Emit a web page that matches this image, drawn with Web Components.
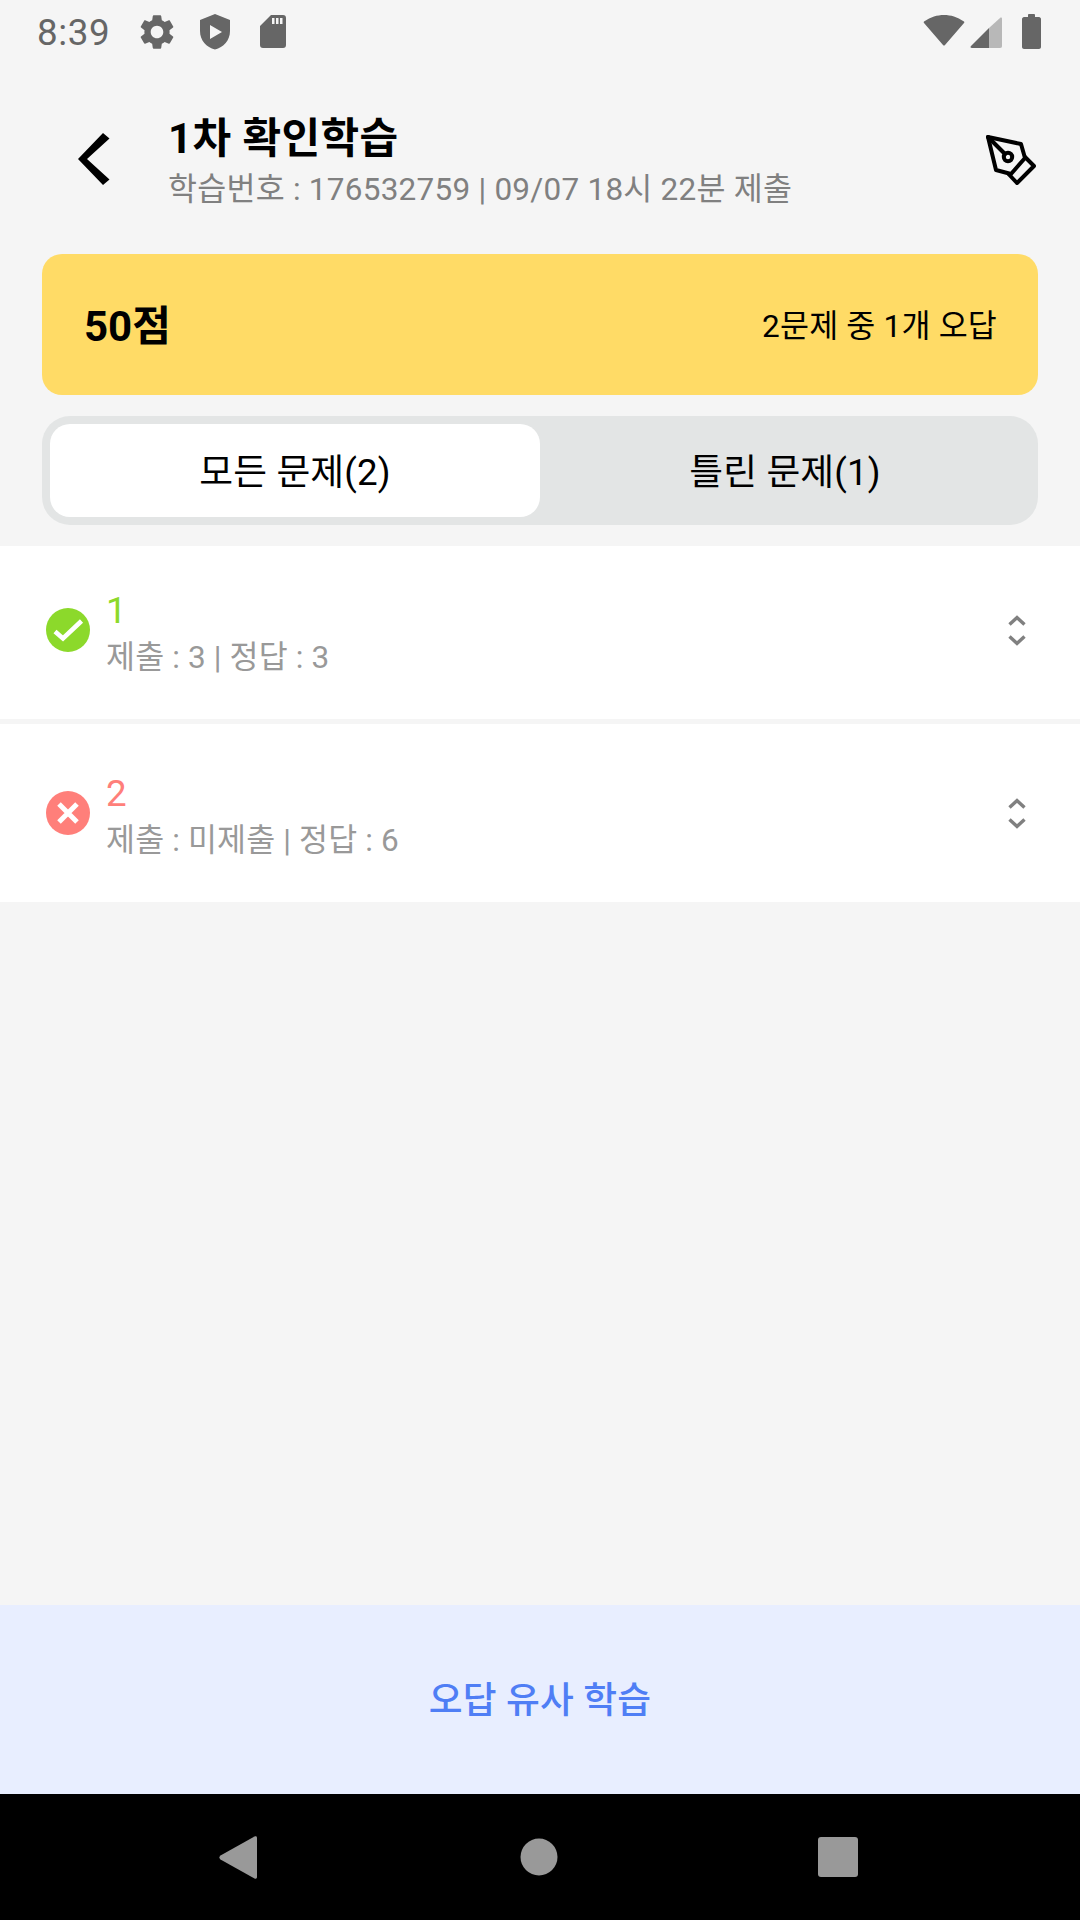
<!DOCTYPE html>
<html lang="ko">
<head>
<meta charset="utf-8">
<title>1차 확인학습</title>
<style>
html, body
{
    margin: 0;
    padding: 0;
    background: #f5f5f5;
    font-family: Roboto, "Noto Sans CJK KR", sans-serif;
}
</style>
</head>
<body>

<review-screen>
    <status-bar slot="top" time="8:39"></status-bar>
    <app-header slot="top">
        <span slot="title">1차 확인학습</span>
        <span slot="sub">학습번호 : 176532759 | 09/07 18시 22분 제출</span>
    </app-header>
    <score-card slot="top">
        <span slot="score">50점</span>
        <span slot="summary">2문제 중 1개 오답</span>
    </score-card>
    <segment-tabs slot="top">
        <span slot="first">모든 문제(2)</span>
        <span slot="second">틀린 문제(1)</span>
    </segment-tabs>
    <question-item status="right" number="1" detail="제출 : 3 | 정답 : 3"></question-item>
    <question-item status="wrong" number="2" detail="제출 : 미제출 | 정답 : 6"></question-item>
    <action-button slot="bottom">오답 유사 학습</action-button>
    <nav-bar slot="bottom"></nav-bar>
</review-screen>

<script>
const screenTemplate = document.createElement('template')

screenTemplate.innerHTML =
`
<style>
:host
{
    display: flex;
    flex-direction: column;
    width: 1080px;
    height: 1920px;
    overflow: hidden;
    background-color: #f5f5f5;
}

/* the list is scrolled a little, so the first row starts under its top edge */

#list
{
    display: flex;
    flex-direction: column;
    gap: 5px;
    flex: 1;
    min-height: 0;
    margin-top: 21px;
    overflow: hidden;
}
slot:not([name])::slotted(question-item:first-of-type)
{
    margin-top: -5px;
}
</style>
<slot name="top"></slot>
<div id="list"><slot></slot></div>
<slot name="bottom"></slot>
`

class ReviewScreen extends HTMLElement
{
    constructor()
    {
        super()

        this.attachShadow({mode: "open"})

        this.shadowRoot.appendChild(screenTemplate.content.cloneNode(true))
    }
}

const statusTemplate = document.createElement('template')

statusTemplate.innerHTML =
`
<style>
:host
{
    display: flex;
    align-items: center;
    height: 63px;
    padding: 0 39px 0 37px;
    color: #666666;
    font-size: 36.75px;
}

svg
{
    display: block;
    fill: #666666;
}

/* LEFT */

#time
{
    width: 71px;
    padding-top: 2px;
    line-height: 61px;
    letter-spacing: 0.6px;
}
#gear
{
    margin-left: 28px;
}
#shield
{
    margin-left: 16px;
}
#card
{
    margin-left: 22px;
}

/* RIGHT */

#right
{
    display: flex;
    align-items: center;
    margin-left: auto;
}
#wifi
{
    margin-bottom: 3px;
}
#signal
{
    margin-left: 5px;
}
#battery
{
    margin-left: 20px;
}
</style>
<span id="time"></span>
<svg id="gear" width="42" height="42" viewBox="0 0 24 24"><path d="M19.14 12.94c.04-.3.06-.61.06-.94 0-.32-.02-.64-.07-.94l2.03-1.58c.18-.14.23-.41.12-.61l-1.92-3.32c-.12-.22-.37-.29-.59-.22l-2.39.96c-.5-.38-1.03-.7-1.62-.94l-.36-2.54c-.04-.24-.24-.41-.48-.41h-3.84c-.24 0-.43.17-.47.41l-.36 2.54c-.59.24-1.13.57-1.62.94l-2.39-.96c-.22-.08-.47 0-.59.22L2.74 8.87c-.12.21-.08.47.12.61l2.03 1.58c-.05.3-.09.63-.09.94s.02.64.07.94l-2.03 1.58c-.18.14-.23.41-.12.61l1.92 3.32c.12.22.37.29.59.22l2.39-.96c.5.38 1.03.7 1.62.94l.36 2.54c.05.24.24.41.48.41h3.84c.24 0 .44-.17.47-.41l.36-2.54c.59-.24 1.13-.56 1.62-.94l2.39.96c.22.08.47 0 .59-.22l1.92-3.32c.12-.22.07-.47-.12-.61l-2.01-1.58zM12 15.6c-1.98 0-3.6-1.62-3.6-3.6s1.62-3.6 3.6-3.6 3.6 1.62 3.6 3.6-1.62 3.6-3.6 3.6z"/></svg>
<svg id="shield" width="42" height="42" viewBox="0 0 42 42"><path fill-rule="evenodd" d="M21 3 L36 9 V20 C36 29.500 29.500 36.500 21 38.500 C12.500 36.500 6 29.500 6 20 V9 Z M16 14 V28 L28 21 Z"/></svg>
<svg id="card" width="30" height="42" viewBox="0 0 30 42"><path fill-rule="evenodd" d="M13 4 H25 C27 4 28 5 28 7 V34 C28 36 27 37 25 37 H5 C3 37 2 36 2 34 V15 Z M14 7 V13 H16.500 V7 Z M18 7 V13 H20.500 V7 Z M22 7 V13 H24.500 V7 Z"/></svg>
<div id="right">
    <svg id="wifi" width="42" height="32" viewBox="0 0 42 32"><path d="M21 1 C28 1 34 3 41 7.500 C41.500 8 41.500 8.500 41 9 L22 31 C21.400 31.700 20.600 31.700 20 31 L1 9 C0.500 8.500 0.500 8 1 7.500 C8 3 14 1 21 1 Z"/></svg>
    <svg id="signal" width="32" height="32" viewBox="0 0 32 32"><path fill="#b8b8b8" d="M19 12 L30 2 C31 1.200 32 1.500 32 3 V30 C32 31 31.500 32 30 32 H19 Z"/><path d="M19 12 V32 H2 C0.500 32 0 31 1 30 Z"/></svg>
    <svg id="battery" width="19" height="35" viewBox="0 0 19 35"><path d="M6 1 C6 0.500 6.500 0 7 0 H12 C12.500 0 13 0.500 13 1 V3 H17 C18 3 19 4 19 5 V33 C19 34 18 35 17 35 H2 C1 35 0 34 0 33 V5 C0 4 1 3 2 3 H6 Z"/></svg>
</div>
`

class StatusBar extends HTMLElement
{
    constructor()
    {
        super()

        this.attachShadow({mode: "open"})

        this.shadowRoot.appendChild(statusTemplate.content.cloneNode(true))
    }

    connectedCallback()
    {
        this.shadowRoot.querySelector('#time').textContent = this.getAttribute('time')
    }
}

const headerTemplate = document.createElement('template')

headerTemplate.innerHTML =
`
<style>
:host
{
    display: flex;
    align-items: flex-start;
    height: 191px;
    padding-left: 76px;
    padding-right: 44px;
    box-sizing: border-box;
}

/* BACK */

#back
{
    flex: none;
    margin-top: 70px;
}

/* TEXT */

#text
{
    display: flex;
    flex-direction: column;
    margin-left: 56px;
    margin-top: 49px;
}
slot[name=title]::slotted(span)
{
    font-size: 42px;
    font-weight: 700;
    line-height: 54px;
    letter-spacing: 0.4px;
    color: #000000;
}
slot[name=sub]::slotted(span)
{
    font-size: 31.5px;
    line-height: 48px;
    letter-spacing: 0.24px;
    color: #808080;
}

/* PEN */

#pen
{
    flex: none;
    margin-left: auto;
    margin-top: 72px;
}
</style>
<svg id="back" width="36" height="54" viewBox="0 0 36 54"><polygon points="27,0 33.500,5.500 11,26 33.500,46.500 27,52 2,26" fill="#000000"/></svg>
<div id="text">
    <slot name="title"></slot>
    <slot name="sub"></slot>
</div>
<svg id="pen" width="50" height="50" viewBox="0 0 50 50" fill="none" stroke="#000000" stroke-width="4" stroke-linejoin="round" stroke-linecap="round">
    <path d="M2 2 L35 9 L39 23 L25 39 L10 35 Z"/>
    <path d="M2 2 L19 19"/>
    <circle cx="22" cy="22" r="4.200"/>
    <path d="M39 22 L48 31 L31 48 L23 39.500"/>
</svg>
`

class AppHeader extends HTMLElement
{
    constructor()
    {
        super()

        this.attachShadow({mode: "open"})

        this.shadowRoot.appendChild(headerTemplate.content.cloneNode(true))
    }
}

const scoreTemplate = document.createElement('template')

scoreTemplate.innerHTML =
`
<style>
:host
{
    display: flex;
    align-items: center;
    justify-content: space-between;
    height: 141px;
    margin: 0 42px;
    padding: 0 41px 4px 42px;
    box-sizing: border-box;
    border-radius: 20px;
    background-color: #ffdb66;
    color: #000000;
}

slot[name=score]::slotted(span)
{
    font-size: 42px;
    font-weight: 700;
}
slot[name=summary]::slotted(span)
{
    font-size: 31.5px;
    letter-spacing: 0.2px;
}
</style>
<slot name="score"></slot>
<slot name="summary"></slot>
`

class ScoreCard extends HTMLElement
{
    constructor()
    {
        super()

        this.attachShadow({mode: "open"})

        this.shadowRoot.appendChild(scoreTemplate.content.cloneNode(true))
    }
}

const tabsTemplate = document.createElement('template')

tabsTemplate.innerHTML =
`
<style>
:host
{
    display: grid;
    grid-template-columns: 1fr 1fr;
    height: 109px;
    margin: 21px 42px 0;
    padding: 8px;
    box-sizing: border-box;
    border-radius: 28px;
    background-color: #e3e5e5;
    color: #000000;
    font-size: 36.75px;
    letter-spacing: 0.15px;
}

.tab
{
    display: flex;
    align-items: center;
    justify-content: center;
    padding-bottom: 4px;
    box-sizing: border-box;
    border-radius: 20px;
}
#active
{
    background-color: #ffffff;
}
</style>
<div class="tab" id="active"><slot name="first"></slot></div>
<div class="tab"><slot name="second"></slot></div>
`

class SegmentTabs extends HTMLElement
{
    constructor()
    {
        super()

        this.attachShadow({mode: "open"})

        this.shadowRoot.appendChild(tabsTemplate.content.cloneNode(true))
    }
}

const itemTemplate = document.createElement('template')

itemTemplate.innerHTML =
`
<style>
:host
{
    display: flex;
    flex: none;
    align-items: center;
    height: 178px;
    padding: 0 54px 0 46px;
    box-sizing: border-box;
    background-color: #ffffff;
}

/* STATUS ICON */

#icon
{
    flex: none;
    display: block;
}

/* TEXT */

#text
{
    display: flex;
    flex-direction: column;
    margin-left: 16px;
    padding-top: 4px;
}
#number
{
    font-size: 36.75px;
    line-height: 52px;
}
#detail
{
    font-size: 31.5px;
    line-height: 42px;
    letter-spacing: 0.15px;
    color: #999999;
}
:host([status=right]) #number
{
    color: #8cd92b;
}
:host([status=wrong]) #number
{
    color: #ff7f7a;
}

/* EXPAND */

#expand
{
    flex: none;
    margin-left: auto;
}
</style>
<svg id="icon" width="44" height="44" viewBox="0 0 44 44"></svg>
<div id="text">
    <span id="number"></span>
    <span id="detail"></span>
</div>
<svg id="expand" width="18" height="31" viewBox="0 0 18 31" fill="none" stroke="#808080" stroke-width="3.400">
    <path d="M1.500 9.500 L9 2.500 L16.500 9.500"/>
    <path d="M1.500 21.500 L9 28.500 L16.500 21.500"/>
</svg>
`

const statusIcons =
{
    right: '<circle cx="22" cy="22" r="22" fill="#8cd92b"/><path d="M9 23.500 L17 30.500 L35.500 13" fill="none" stroke="#ffffff" stroke-width="4.600"/>',
    wrong: '<circle cx="22" cy="22" r="22" fill="#ff7f7a"/><path d="M13 13 L31 31 M31 13 L13 31" fill="none" stroke="#ffffff" stroke-width="5"/>'
}

class QuestionItem extends HTMLElement
{
    constructor()
    {
        super()

        this.attachShadow({mode: "open"})

        this.shadowRoot.appendChild(itemTemplate.content.cloneNode(true))
    }

    connectedCallback()
    {
        this.shadowRoot.querySelector('#icon').innerHTML = statusIcons[this.getAttribute('status')]
        this.shadowRoot.querySelector('#number').textContent = this.getAttribute('number')
        this.shadowRoot.querySelector('#detail').textContent = this.getAttribute('detail')
    }
}

const buttonTemplate = document.createElement('template')

buttonTemplate.innerHTML =
`
<style>
:host
{
    display: flex;
    flex: none;
    align-items: center;
    justify-content: center;
    height: 189px;
    padding-bottom: 6px;
    box-sizing: border-box;
    background-color: #e8eeff;
    color: #4f7ef5;
    font-size: 36.75px;
    font-weight: 500;
    letter-spacing: 0.15px;
}
</style>
<slot></slot>
`

class ActionButton extends HTMLElement
{
    constructor()
    {
        super()

        this.attachShadow({mode: "open"})

        this.shadowRoot.appendChild(buttonTemplate.content.cloneNode(true))
    }
}

const navTemplate = document.createElement('template')

navTemplate.innerHTML =
`
<style>
:host
{
    display: grid;
    flex: none;
    grid-template-columns: 1fr 1fr 1fr;
    align-items: center;
    justify-items: center;
    height: 126px;
    padding: 0 92px 0 88px;
    background-color: #000000;
}

svg
{
    display: block;
    fill: #999999;
}
#home
{
    margin-left: 2px;
}
</style>
<svg width="38" height="43" viewBox="0 0 38 43"><path d="M35.500 0.600 C37 -0.100 38 0.500 38 2 V41 C38 42.500 37 43.100 35.500 42.400 L1.500 23.500 C0 22.500 0 20.500 1.500 19.500 Z"/></svg>
<svg id="home" width="38" height="38" viewBox="0 0 38 38"><circle cx="19" cy="19" r="18.500"/></svg>
<svg width="40" height="40" viewBox="0 0 40 40"><rect width="40" height="40" rx="3"/></svg>
`

class NavBar extends HTMLElement
{
    constructor()
    {
        super()

        this.attachShadow({mode: "open"})

        this.shadowRoot.appendChild(navTemplate.content.cloneNode(true))
    }
}

window.customElements.define('review-screen', ReviewScreen)
window.customElements.define('status-bar', StatusBar)
window.customElements.define('app-header', AppHeader)
window.customElements.define('score-card', ScoreCard)
window.customElements.define('segment-tabs', SegmentTabs)
window.customElements.define('question-item', QuestionItem)
window.customElements.define('action-button', ActionButton)
window.customElements.define('nav-bar', NavBar)
</script>
</body>
</html>
